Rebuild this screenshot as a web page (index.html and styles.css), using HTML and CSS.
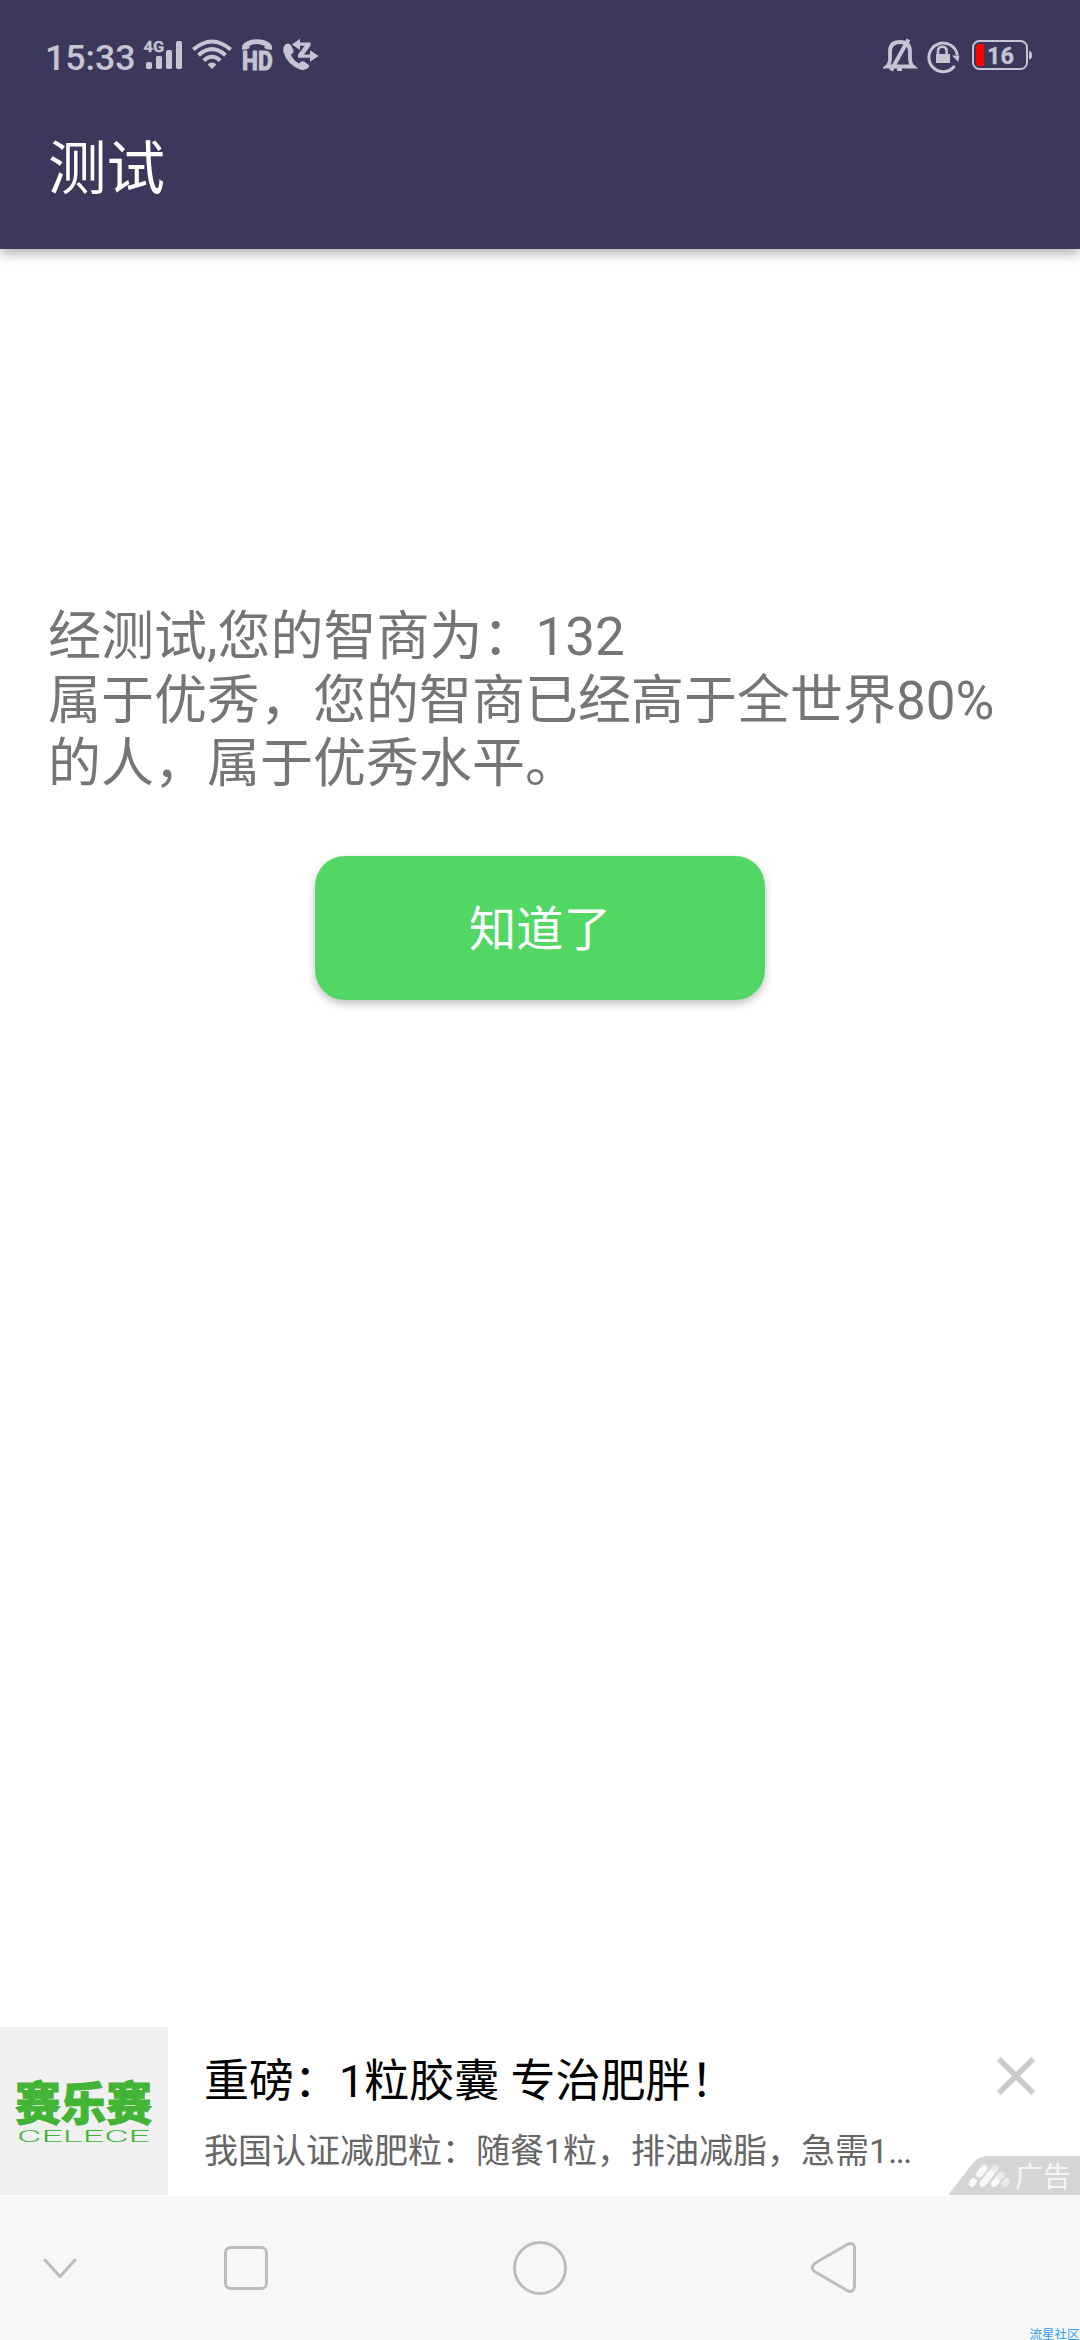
FILE: index.html
```html
<!DOCTYPE html>
<html lang="zh-CN">
<head>
<meta charset="utf-8">
<title>测试</title>
<link rel="stylesheet" href="styles.css">
</head>
<body>
<div class="screen">
  <header class="header">
    <div class="status">
      <span class="clock">15:33</span>
      <svg class="signals" width="180" height="50" viewBox="142 30 180 50">
        <text class="net" x="143.6" y="52" textLength="20.5" lengthAdjust="spacingAndGlyphs">4G</text>
        <g fill="#c6c4d2">
          <rect x="146" y="62" width="6" height="7" rx="1.7"/>
          <rect x="156" y="56" width="6" height="13" rx="1.7"/>
          <rect x="166" y="50" width="6" height="19" rx="1.7"/>
          <rect x="176" y="41" width="6" height="28" rx="1.7"/>
          <path d="M212 69l-4.500-4.600q4.500-3.600 9 0z"/>
        </g>
        <g fill="none" stroke="#c6c4d2" stroke-width="4">
          <path d="M193.300 49.600Q212 33.400 230.700 49.600"/>
          <path d="M198.500 55.200Q212 43.200 225.500 55.200"/>
          <path d="M203.700 60.500Q212 53 220.300 60.500"/>
        </g>
        <path fill="#c6c4d2" d="M242 47.500q0-3.500 4-5.500q4-2.800 11-2.800t11 2.800q4 2 4 5.500v2.200q-4.500 0-7.500-1.500v-2.500q-4-1.700-7.500-1.700t-7.500 1.700v2.500q-3 1.500-7.500 1.500z"/>
        <text class="hd" x="242" y="69.500" textLength="30.500" lengthAdjust="spacingAndGlyphs">HD</text>
        <g fill="#c6c4d2">
          <path d="M286 44q3.500-1.800 5.700 2.500l1.600 3.400q1 2.700-2.300 4.600q2 5.700 8 9q2.400-3.400 5.300-1.800l3.400 2.200q2.300 1.500 1.300 3.200q-3.300 4-8.300 2.600q-13.500-4.700-17.300-17.700q-1.100-5.500 2.600-8z"/>
          <path d="M292 44.500l8-5.800v3.800h10.500v3.300l-6.500 8.700h6v-4.200l8.500 5.700-8.500 5.700v-4h-12v-3.200l6.700-8.700h-4.700v4.200z"/>
        </g>
      </svg>
      <svg class="system" width="152" height="40" viewBox="883 35 152 40">
        <g fill="none" stroke="#c6c4d2" stroke-width="3.200">
          <path d="M887 66.500h26q-3-2.500-3-8v-7q0-9.500-10-9.500t-10 9.500v7q0 5.500-3 8z" stroke-width="3.800"/>
          <path d="M891 70.500l17.500-31" stroke-width="4"/>
          <path d="M897 69.500h5" stroke-width="3"/>
          <path d="M954.600 66A14.300 14.300 0 1 1 957.300 55" stroke-width="3"/>
          <path d="M938 56v-5q0-4.200 4.300-4.200t4.300 4.200v5" stroke-width="2.600"/>
          <rect x="973" y="41" width="54" height="28" rx="6.500" stroke-width="2"/>
        </g>
        <path fill="#c6c4d2" d="M936 54h14v9h-14zM952 55.500h7.300l-1 6.500zM1029 51.200q3-.5 3 4t-3 4z"/>
        <path fill="#f00" d="M984 44v22h-5q-3 0-3-3V47q0-3 3-3z"/>
        <text class="level" x="987" y="64" textLength="27" lengthAdjust="spacingAndGlyphs">16</text>
      </svg>
    </div>
    <h1 class="title">测试</h1>
  </header>

  <main class="content">
    <p class="result">经测试,您的智商为：132<br>属于优秀，您的智商已经高于全世界80%<br>的人，属于优秀水平。</p>
    <button class="confirm">知道了</button>
  </main>

  <section class="ad">
    <svg class="ad-logo" width="168" height="168" viewBox="0 0 168 168">
      <rect width="168" height="168" fill="#f0f0f0"/>
      <text class="brand" x="15" y="92.500" textLength="137" lengthAdjust="spacingAndGlyphs">赛乐赛</text>
      <text class="brand-latin" x="17" y="115" textLength="133" lengthAdjust="spacingAndGlyphs">CELECE</text>
    </svg>
    <div class="ad-copy">
      <div class="ad-title">重磅：1粒胶囊 专治肥胖！</div>
      <div class="ad-desc">我国认证减肥粒：随餐1粒，排油减脂，急需1<span class="dots">...</span></div>
    </div>
    <div class="ad-side">
      <svg class="close" width="38" height="38" viewBox="0 0 38 38"><path d="M2 2l34 34M36 2L2 36" stroke="#c9c9c9" stroke-width="5.500"/></svg>
      <svg class="badge" width="132" height="39" viewBox="0 0 132 39">
        <path fill="#d5d5d5" d="M0 39L25 7Q31 0 40 0H132V39z"/>
        <g stroke="#f8f8f8" stroke-width="6.800" stroke-linecap="round">
          <path d="M24 27.500l1.500-2M31.500 18l4.500-6M35 27.500l8-10"/>
          <path d="M46.500 27.500l2-2.500"/>
          <path opacity=".6" d="M45.500 14l1.500-2M50.500 22l2.500-3M57 27.500l1.500-2"/>
        </g>
        <text class="badge-text" x="67" y="31">广告</text>
      </svg>
    </div>
  </section>

  <nav class="nav">
    <svg width="1080" height="144" viewBox="0 2196 1080 144">
      <g fill="none" stroke="#bdbdbd" stroke-width="3" stroke-linecap="round" stroke-linejoin="round">
        <path d="M45 2260l15 16.500 15-16.500"/>
        <rect x="225.500" y="2247.500" width="41" height="41" rx="5"/>
        <circle cx="540" cy="2268" r="25.500"/>
        <path d="M814.500 2263.500L847 2244.500Q853 2241.500 854.500 2247V2287Q853 2293.500 847 2290.500L814.500 2271.500Q810 2267.500 814.500 2263.500z"/>
      </g>
      <text class="mark" x="1029.500" y="2338.500" textLength="50" lengthAdjust="spacingAndGlyphs">流星社区</text>
    </svg>
  </nav>
</div>
</body>
</html>
```

FILE: styles.css
```css
* { box-sizing: border-box; margin: 0; padding: 0; }

body {
  background: #fff;
  font-family: Roboto, "Noto Sans CJK SC", sans-serif;
}

.screen {
  display: flex;
  flex-direction: column;
  width: 1080px;
  height: 2340px;
  overflow: hidden;
}

.header {
  height: 249px;
  background: #3b385c;
  box-shadow: 0 4px 12px rgba(0, 0, 0, .33);
}

.status {
  display: flex;
  align-items: center;
  height: 110px;
  padding: 0 45px;
}

.clock {
  width: 97px;
  color: #c6c4d2;
  font-size: 35.700px;
  font-weight: 500;
  line-height: 40px;
  padding-top: 5px;
}

.signals { overflow: visible; }
.system { margin-left: auto; }
.net, .hd, .level { fill: #c6c4d2; stroke: #c6c4d2; font-weight: 700; }
.net { font-size: 15px; stroke-width: .3px; }
.hd { font-size: 26px; stroke-width: 1.200px; }
.level { font-size: 24px; stroke-width: .3px; }

.title {
  padding: 1px 0 0 48px;
  color: #fff;
  font-size: 58.500px;
  font-weight: 400;
  line-height: 116px;
}

.content {
  display: flex;
  flex: 1;
  flex-direction: column;
  align-items: center;
  padding-top: 357px;
}

.result {
  align-self: stretch;
  padding-left: 48px;
  color: #757575;
  font-size: 53px;
  line-height: 63.500px;
  white-space: nowrap;
}

.confirm {
  width: 450px;
  height: 144px;
  margin-top: 59px;
  padding-top: 5px;
  border: 0;
  border-radius: 30px;
  background: #52d765;
  box-shadow: 0 4px 8px rgba(0, 0, 0, .25);
  color: #fff;
  font: 400 47.300px/139px Roboto, "Noto Sans CJK SC", sans-serif;
}

.ad {
  display: flex;
  height: 169px;
}

.brand {
  fill: #43b436;
  stroke: #43b436;
  stroke-width: 1px;
  font: 900 46px "Noto Sans CJK SC", sans-serif;
}

.brand-latin {
  fill: #43b436;
  font: 300 17px Roboto, sans-serif;
}

.ad-copy {
  flex: 1;
  padding: 25px 0 0 36px;
  white-space: nowrap;
}

.ad-title { color: #000; font-size: 45px; line-height: 60px; }
.ad-desc { margin-top: 14px; color: #666; font-size: 34px; line-height: 50px; }
.dots { letter-spacing: -1.500px; }

.ad-side {
  display: flex;
  flex-direction: column;
  justify-content: space-between;
  align-items: flex-end;
  padding: 30px 0 1px;
}

.close { margin-right: 45px; }
.badge-text { fill: #f5f5f5; font: 400 28px "Noto Sans CJK SC", sans-serif; }

.nav { height: 144px; background: #f7f7f7; }
.nav svg { display: block; }
.mark { fill: #2f9df4; font: 400 12.500px "Noto Sans CJK SC", sans-serif; }
```
